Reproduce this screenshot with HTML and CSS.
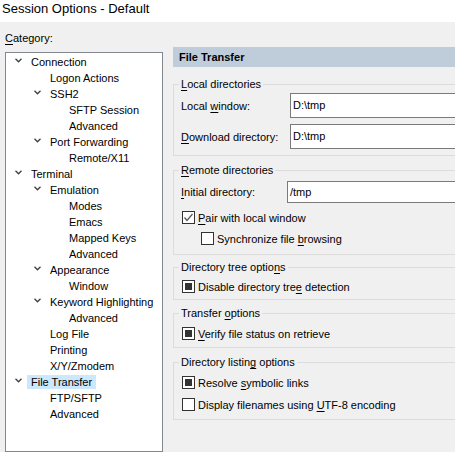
FILE: index.html
```html
<!DOCTYPE html>
<html>
<head>
<meta charset="utf-8">
<link rel="stylesheet" href="styles.css">
</head>
<body>
<div class="titlebar">Session Options - Default</div>
<div class="main">
  <div class="left">
    <div class="cat-label"><u>C</u>ategory:</div>
    <div class="tree">
      <div class="row l0"><span class="tw"><svg width="7" height="5" viewBox="0 0 7 5"><polyline points="0.5,0.8 3.5,3.8 6.5,0.8"/></svg></span><span class="lbl">Connection</span></div>
      <div class="row l1"><span class="tw"></span><span class="lbl">Logon Actions</span></div>
      <div class="row l1"><span class="tw"><svg width="7" height="5" viewBox="0 0 7 5"><polyline points="0.5,0.8 3.5,3.8 6.5,0.8"/></svg></span><span class="lbl">SSH2</span></div>
      <div class="row l2"><span class="tw"></span><span class="lbl">SFTP Session</span></div>
      <div class="row l2"><span class="tw"></span><span class="lbl">Advanced</span></div>
      <div class="row l1"><span class="tw"><svg width="7" height="5" viewBox="0 0 7 5"><polyline points="0.5,0.8 3.5,3.8 6.5,0.8"/></svg></span><span class="lbl">Port Forwarding</span></div>
      <div class="row l2"><span class="tw"></span><span class="lbl">Remote/X11</span></div>
      <div class="row l0"><span class="tw"><svg width="7" height="5" viewBox="0 0 7 5"><polyline points="0.5,0.8 3.5,3.8 6.5,0.8"/></svg></span><span class="lbl">Terminal</span></div>
      <div class="row l1"><span class="tw"><svg width="7" height="5" viewBox="0 0 7 5"><polyline points="0.5,0.8 3.5,3.8 6.5,0.8"/></svg></span><span class="lbl">Emulation</span></div>
      <div class="row l2"><span class="tw"></span><span class="lbl">Modes</span></div>
      <div class="row l2"><span class="tw"></span><span class="lbl">Emacs</span></div>
      <div class="row l2"><span class="tw"></span><span class="lbl">Mapped Keys</span></div>
      <div class="row l2"><span class="tw"></span><span class="lbl">Advanced</span></div>
      <div class="row l1"><span class="tw"><svg width="7" height="5" viewBox="0 0 7 5"><polyline points="0.5,0.8 3.5,3.8 6.5,0.8"/></svg></span><span class="lbl">Appearance</span></div>
      <div class="row l2"><span class="tw"></span><span class="lbl">Window</span></div>
      <div class="row l1"><span class="tw"><svg width="7" height="5" viewBox="0 0 7 5"><polyline points="0.5,0.8 3.5,3.8 6.5,0.8"/></svg></span><span class="lbl">Keyword Highlighting</span></div>
      <div class="row l2"><span class="tw"></span><span class="lbl">Advanced</span></div>
      <div class="row l1"><span class="tw"></span><span class="lbl">Log File</span></div>
      <div class="row l1"><span class="tw"></span><span class="lbl">Printing</span></div>
      <div class="row l1"><span class="tw"></span><span class="lbl">X/Y/Zmodem</span></div>
      <div class="row l0"><span class="tw"><svg width="7" height="5" viewBox="0 0 7 5"><polyline points="0.5,0.8 3.5,3.8 6.5,0.8"/></svg></span><span class="lbl sel">File Transfer</span></div>
      <div class="row l1"><span class="tw"></span><span class="lbl">FTP/SFTP</span></div>
      <div class="row l1"><span class="tw"></span><span class="lbl">Advanced</span></div>
    </div>
  </div>
  <div class="right">
    <div class="header">File Transfer</div>

    <fieldset class="grp g1">
      <legend><u>L</u>ocal directories</legend>
      <div class="field f1">
        <span class="flabel w109">Local <u>w</u>indow:</span>
        <span class="input">D:\tmp</span>
      </div>
      <div class="field f2">
        <span class="flabel w109"><u>D</u>ownload directory:</span>
        <span class="input">D:\tmp</span>
      </div>
    </fieldset>

    <fieldset class="grp g2">
      <legend><u>R</u>emote directories</legend>
      <div class="field f3">
        <span class="flabel w106"><u>I</u>nitial directory:</span>
        <span class="input small">/tmp</span>
      </div>
      <div class="check c-first">
        <span class="box checked"><svg width="11" height="11" viewBox="0 0 11 11"><polyline points="1.5,5.5 4,8.5 9.5,2"/></svg></span>
        <span><u>P</u>air with local window</span>
      </div>
      <div class="check indent c-next">
        <span class="box"></span>
        <span>Synchronize file <u>b</u>rowsing</span>
      </div>
    </fieldset>

    <fieldset class="grp g3">
      <legend>Directory tree optio<u>n</u>s</legend>
      <div class="check">
        <span class="box mixed"><span class="fill"></span></span>
        <span>Disable directory tre<u>e</u> detection</span>
      </div>
    </fieldset>

    <fieldset class="grp g4">
      <legend>Transfer <u>o</u>ptions</legend>
      <div class="check">
        <span class="box mixed"><span class="fill"></span></span>
        <span><u>V</u>erify file status on retrieve</span>
      </div>
    </fieldset>

    <fieldset class="grp g5">
      <legend>Directory listin<u>g</u> options</legend>
      <div class="check">
        <span class="box mixed"><span class="fill"></span></span>
        <span>Resolve <u>s</u>ymbolic links</span>
      </div>
      <div class="check c-gap">
        <span class="box"></span>
        <span>Display filenames using <u>U</u>TF-8 encoding</span>
      </div>
    </fieldset>
  </div>
</div>
</body>
</html>
```

FILE: styles.css
```css
html, body {
  margin: 0;
  padding: 0;
}
body {
  width: 455px;
  height: 452px;
  overflow: hidden;
  background: #f0f0f0;
  font-family: "Liberation Sans", Arial, sans-serif;
  font-size: 11px;
  color: #000;
}
u {
  text-decoration-thickness: 1px;
  text-underline-offset: 2px;
}
.titlebar {
  height: 22px;
  background: #ffffff;
  font-size: 13px;
  line-height: 18px;
  padding-left: 2px;
  box-sizing: border-box;
}
.main {
  display: flex;
  padding-left: 5px;
}
.left {
  width: 158px;
  flex: none;
}
.cat-label {
  height: 30px;
  box-sizing: border-box;
  padding-top: 8px;
  line-height: 16px;
}
.tree {
  height: 400px;
  box-sizing: border-box;
  border: 1px solid #828790;
  background: #ffffff;
}
.row {
  height: 16px;
  line-height: 16px;
  display: flex;
  align-items: center;
  white-space: nowrap;
}
.row.l0 { padding-left: 9px; }
.row.l1 { padding-left: 28px; }
.row.l2 { padding-left: 47px; }
.tw {
  width: 16px;
  flex: none;
  height: 16px;
  display: flex;
  align-items: center;
  padding-bottom: 2px;
  box-sizing: border-box;
}
.tw svg polyline {
  fill: none;
  stroke: #404040;
  stroke-width: 1.3;
}
.lbl {
  display: inline-block;
  height: 14px;
  line-height: 14px;
  padding: 0 4px;
  margin-left: -4px;
  margin-top: 2px;
}
.lbl.sel {
  background: #cce8ff;
}
.right {
  margin-left: 10px;
  margin-top: 25px;
  width: 320px;
  flex: none;
  white-space: nowrap;
}
.header {
  height: 20px;
  line-height: 20px;
  background: #bfcddb;
  font-weight: bold;
  padding-left: 6px;
}
.grp {
  margin: 6px 0 0 0;
  border: 1px solid #dcdcdc;
  padding: 5px 7px 5px 7px;
  min-width: 0;
}
.grp legend {
  line-height: 14px;
  padding: 0 2px;
  margin-left: -2px;
}
.g1 { margin-top: 10px; padding-top: 2px; padding-bottom: 6px; }
.g2 { margin-top: 7px; padding-top: 4px; padding-bottom: 7px; }
.g3 { margin-top: 5px; padding-top: 4px; padding-bottom: 4px; }
.g4 { margin-top: 6px; }
.g5 { margin-top: 7px; padding-bottom: 6px; }
.field {
  display: flex;
  align-items: center;
}
.f2 { margin-top: 6px; }
.flabel {
  flex: none;
}
.w109 { width: 109px; }
.w106 { width: 106px; }
.input {
  flex: 1;
  height: 25px;
  box-sizing: border-box;
  border: 1px solid #7a7a7a;
  background: #ffffff;
  padding-left: 2px;
  line-height: 23px;
}
.input.small {
  height: 22px;
  line-height: 20px;
}
.check {
  display: flex;
  align-items: center;
  height: 17px;
  padding-left: 1px;
}
.check.indent { padding-left: 20px; }
.c-first { margin-top: 6px; }
.c-next { margin-top: 4px; }
.c-gap { margin-top: 5px; }
.box {
  width: 13px;
  height: 13px;
  box-sizing: border-box;
  border: 1px solid #333333;
  background: #ffffff;
  margin-right: 3px;
  flex: none;
  display: flex;
  align-items: center;
  justify-content: center;
}
.box svg polyline {
  fill: none;
  stroke: #555555;
  stroke-width: 1.2;
}
.box .fill {
  width: 7px;
  height: 7px;
  background: #333333;
}
```
